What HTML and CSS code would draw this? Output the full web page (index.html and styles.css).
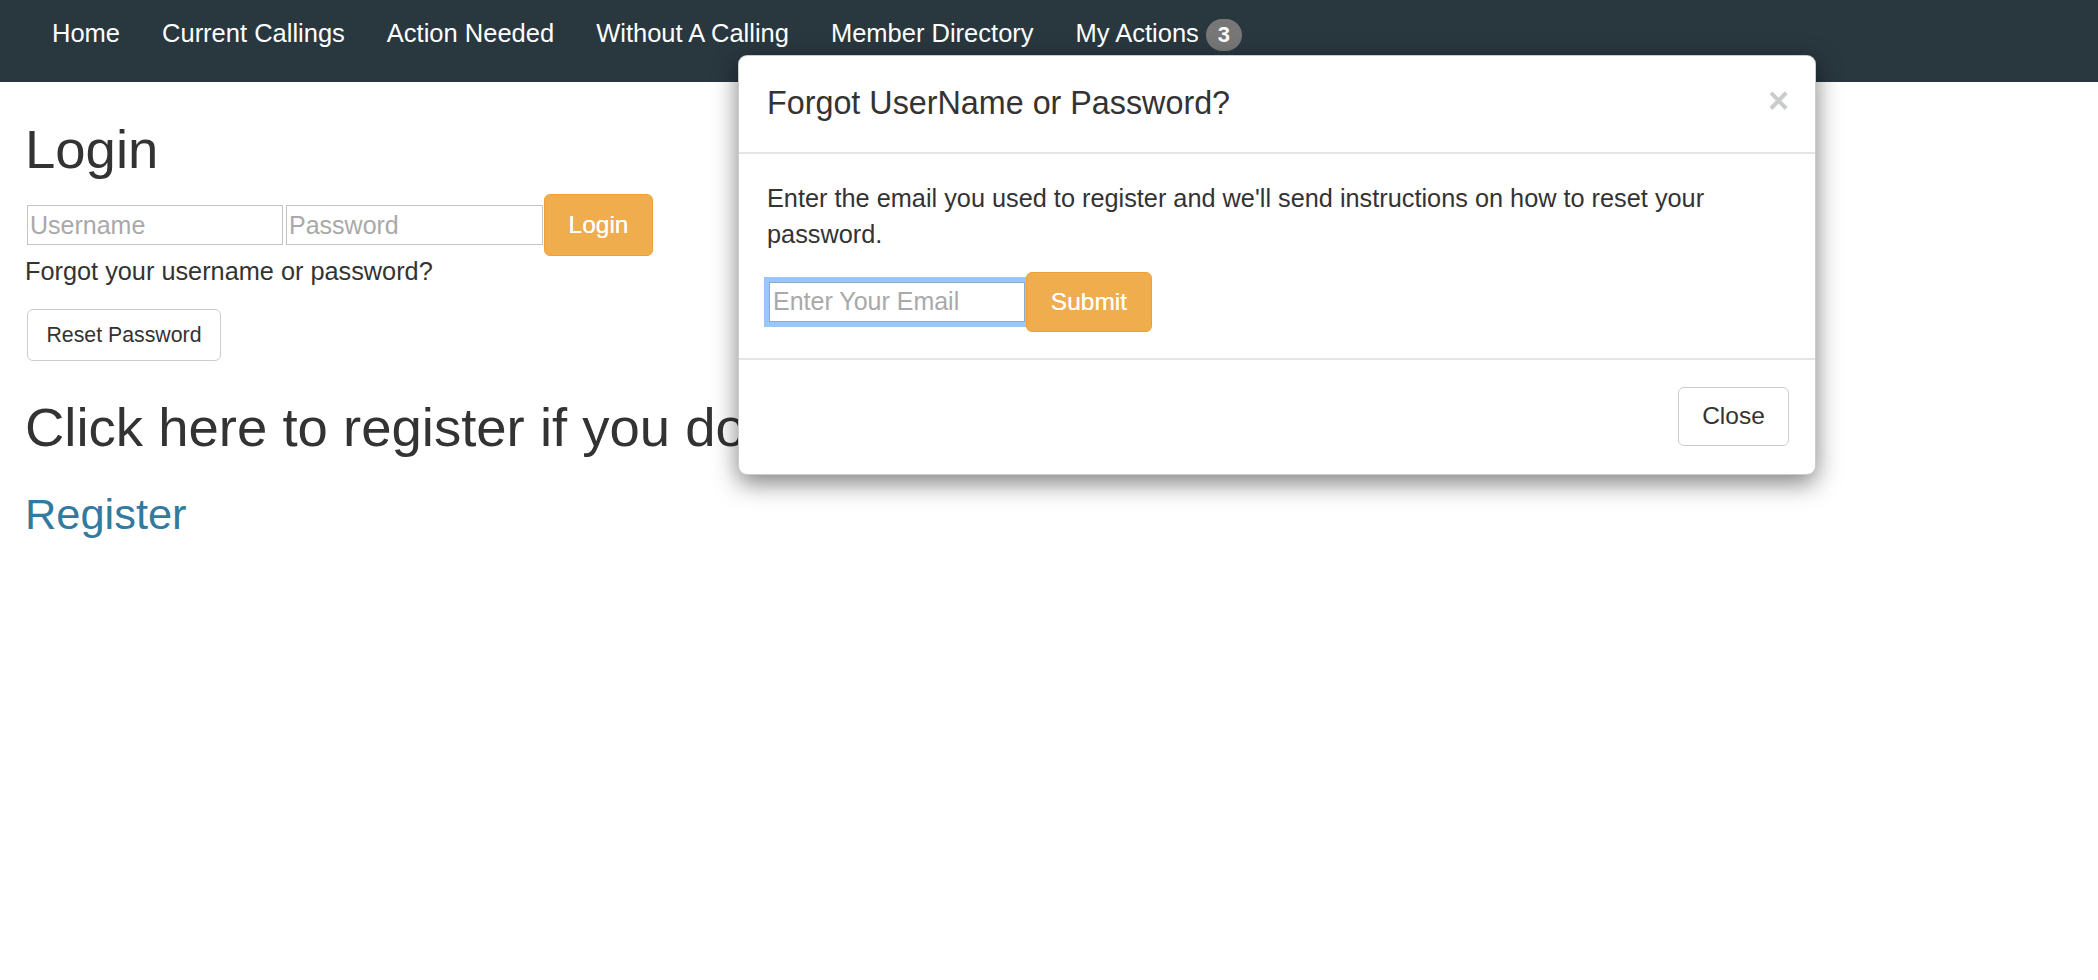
FILE: index.html
```html
<!DOCTYPE html>
<html lang="en">
<head>
<meta charset="utf-8">
<title>Login</title>
<link rel="stylesheet" href="styles.css">
</head>
<body>
<nav class="navbar">
  <ul class="nav">
    <li><a href="#">Home</a></li>
    <li><a href="#">Current Callings</a></li>
    <li><a href="#">Action Needed</a></li>
    <li><a href="#">Without A Calling</a></li>
    <li><a href="#">Member Directory</a></li>
    <li><a href="#">My Actions<span class="badge">3</span></a></li>
  </ul>
</nav>

<main class="content">
  <h1 class="title">Login</h1>
  <form class="login-row">
    <input class="field field-user" type="text" placeholder="Username">
    <input class="field field-pass" type="password" placeholder="Password">
    <button class="btn btn-warning btn-login" type="button">Login</button>
  </form>
  <p class="forgot">Forgot your username or password?</p>
  <button class="btn btn-default btn-reset" type="button">Reset Password</button>
  <h1 class="register-title">Click here to register if you don't have an account</h1>
  <a class="register-link" href="#">Register</a>
</main>

<div class="modal">
  <div class="modal-header">
    <h4 class="modal-title">Forgot UserName or Password?</h4>
    <button class="close" type="button">×</button>
  </div>
  <div class="modal-body">
    <p class="modal-text">Enter the email you used to register and we'll send instructions on how to reset your password.</p>
    <div class="email-row">
      <input class="field field-email" type="email" placeholder="Enter Your Email">
      <button class="btn btn-warning btn-submit" type="button">Submit</button>
    </div>
  </div>
  <div class="modal-footer">
    <button class="btn btn-default btn-close" type="button">Close</button>
  </div>
</div>
</body>
</html>
```

FILE: styles.css
```css
* { box-sizing: border-box; }

html, body {
  margin: 0;
  padding: 0;
  background: #fff;
}

body {
  font-family: "Liberation Sans", Arial, Helvetica, sans-serif;
  color: #333;
  position: relative;
  min-height: 980px;
}

/* ---------- navbar ---------- */
.navbar {
  height: 82px;
  background: #29373f;
}

.nav {
  list-style: none;
  margin: 0;
  padding: 15px 0 0 31px;
  display: flex;
}

.nav li a {
  display: flex;
  align-items: center;
  padding: 0 21px;
  height: 37px;
  color: #fff;
  text-decoration: none;
  font-size: 25.5px;
  white-space: nowrap;
}

.badge {
  display: inline-flex;
  align-items: center;
  justify-content: center;
  width: 36px;
  height: 32px;
  margin-left: 7px;
  margin-top: 3px;
  border-radius: 16px;
  background: #777;
  color: #fff;
  font-weight: bold;
  font-size: 22px;
}

/* ---------- main content ---------- */
.content {
  padding: 0 0 0 25px;
}

.title,
.register-title {
  font-size: 54.5px;
  font-weight: normal;
  line-height: 60px;
  margin: 38px 0 14px 0;
  white-space: nowrap;
}

.register-title {
  margin: 37px 0 33px 0;
}

.login-row {
  display: flex;
  align-items: center;
  margin: 0 0 0 2px;
  height: 62px;
}

.field {
  font-family: inherit;
  font-size: 25px;
  height: 40px;
  border: 1px solid #c4c4c4;
  border-radius: 0;
  padding: 0 2px;
  color: #333;
  background: #fff;
  outline: none;
}

.field::placeholder {
  color: #a9a9a9;
}

.field-user { width: 256px; margin-right: 3px; }
.field-pass { width: 257px; margin-right: 1px; }

.btn {
  font-family: inherit;
  border: 1px solid transparent;
  border-radius: 6px;
  cursor: pointer;
  white-space: nowrap;
}

.btn-warning {
  background: #f0ad4e;
  border-color: #eea236;
  color: #fff;
  font-size: 24.5px;
  line-height: 34px;
  padding: 13px 23px;
  text-shadow: 0 0 0.4px #fff;
}

.btn-default {
  background: #fff;
  border-color: #ccc;
  color: #333;
}

.btn-login { width: 109px; height: 62px; }

.forgot {
  font-size: 25.3px;
  line-height: 30px;
  margin: 0;
}

.btn-reset {
  display: block;
  margin: 23px 0 0 2px;
  width: 194px;
  height: 52px;
  font-size: 21.3px;
  line-height: 30px;
  padding: 10px 18px;
}

.register-link {
  display: block;
  font-size: 43.4px;
  line-height: 46px;
  color: #327a9f;
  text-decoration: none;
}

/* ---------- modal (overlay) ---------- */
.modal {
  position: absolute;
  top: 55px;
  left: 738px;
  width: 1078px;
  height: 420px;
  background: #fff;
  border: 1px solid rgba(0, 0, 0, 0.2);
  border-radius: 9px;
  box-shadow: 0 8px 24px rgba(0, 0, 0, 0.5);
  display: flex;
  flex-direction: column;
}

.modal-header {
  display: flex;
  align-items: center;
  justify-content: space-between;
  padding: 24px 26px 26px 28px;
  border-bottom: 2px solid #e5e5e5;
}

.modal-title {
  margin: 0;
  font-size: 32.3px;
  line-height: 46px;
  font-weight: normal;
  color: #333;
}

.close {
  background: none;
  border: 0;
  padding: 0;
  margin-top: -5px;
  font-family: inherit;
  font-size: 36px;
  font-weight: bold;
  line-height: 1;
  color: #000;
  opacity: 0.2;
  cursor: pointer;
}

.modal-body {
  padding: 26px 28px 26px 28px;
  border-bottom: 2px solid #e5e5e5;
}

.modal-text {
  margin: 0 0 19px 0;
  font-size: 25.3px;
  line-height: 36.4px;
  width: 960px;
}

.email-row {
  display: flex;
  align-items: center;
  height: 60px;
  margin-left: 2px;
}

.field-email {
  width: 256px;
  height: 40px;
  border: 1px solid #8fa9c8;
  padding: 0 3px;
  outline: 5px solid rgba(120, 180, 250, 0.75);
  outline-offset: 0;
  margin-right: 1px;
  caret-color: #000;
}

.btn-submit {
  width: 126px;
  height: 60px;
  padding: 12px 23px;
  position: relative;
}

.modal-footer {
  display: flex;
  justify-content: flex-end;
  padding: 27px 26px 27px 28px;
}

.btn-close {
  width: 111px;
  height: 59px;
  font-size: 24.5px;
  line-height: 34px;
  padding: 11px 23px;
}
```
